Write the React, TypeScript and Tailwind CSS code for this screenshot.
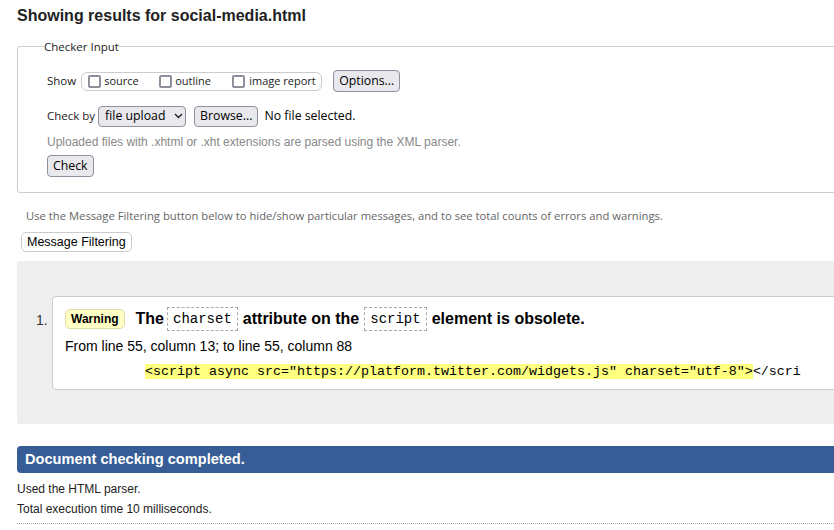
import React from "react";

const arial = { fontFamily: '"Liberation Sans", Arial, sans-serif' };

function Box() {
  return <span className="inline-block w-[13px] h-[13px] border-2 border-[#8f8f9d] rounded-[2px] bg-white shrink-0" />;
}

export default function App() {
  return (
    <div className="w-[834px] h-[530px] overflow-hidden bg-white text-[#222] font-['Liberation_Sans',Arial,sans-serif]">
      <div className="w-[900px] pl-[17px]">
        <h2 className="h-[32px] leading-[32px] text-[16px] font-bold text-[#222]">Showing results for social-media.html</h2>

        <fieldset className="mt-[6px] border border-[#ccc] rounded-[3px] pl-[29px] pr-0 pt-[15px] pb-[12px] h-[155px] font-['Open_Sans',sans-serif]">
          <legend className="ml-[-3px] px-0 text-[11.5px] leading-[17px] text-[#222]">Checker Input</legend>
          <div className="flex items-center h-[22px] text-[11.5px]">
            <span className="mr-[5px]">Show</span>
            <div className="flex items-center h-[19px] w-[241px] border border-[#ccc] rounded-[6px] pl-[6px]">
              <Box />
              <span className="ml-[3px] text-[11px] w-[55px]">source</span>
              <Box />
              <span className="ml-[3px] text-[11px] w-[57px]">outline</span>
              <Box />
              <span className="ml-[4px] text-[11px]">image report</span>
            </div>
            <button className="ml-[11px] h-[22px] px-[5px] bg-[#e9e9ed] border border-[#8f8f9d] rounded-[4px] text-[12.3px] text-black">Options...</button>
          </div>
          <div className="flex items-center h-[22px] mt-[13px] text-[11.5px]">
            <span className="mr-[3px]">Check by</span>
            <div className="flex items-center h-[21px] w-[88px] bg-[#e9e9ed] border border-[#8f8f9d] rounded-[4px] pl-[6px] text-[12.3px] text-black">
              <span>file upload</span>
              <svg className="ml-[9px]" width="9" height="6" viewBox="0 0 9 6"><path d="M1 1l3.5 3.5L8 1" fill="none" stroke="#222" strokeWidth="1.4" /></svg>
            </div>
            <button className="ml-[8px] h-[21px] px-[5px] bg-[#e9e9ed] border border-[#8f8f9d] rounded-[4px] text-[12.3px] text-black">Browse...</button>
            <span className="ml-[6px] text-[12.3px] text-black">No file selected.</span>
          </div>
          <p className="mt-[5px] leading-[20px] text-[12px] text-[#888]" style={arial}>Uploaded files with .xhtml or .xht extensions are parsed using the XML parser.</p>
          <button className="mt-[3px] h-[22px] px-[5px] bg-[#e9e9ed] border border-[#8f8f9d] rounded-[4px] text-[12.3px] text-black">Check</button>
        </fieldset>

        <p className="mt-[14px] pl-[9px] leading-[18px] text-[11.25px] text-[#666] font-['Open_Sans',sans-serif]">Use the Message Filtering button below to hide/show particular messages, and to see total counts of errors and warnings.</p>
        <button className="mt-[7px] ml-[4px] h-[20px] px-[5px] bg-white border border-[#ccc] rounded-[5px] text-[12.5px] text-black font-['Liberation_Sans',Arial,sans-serif]">Message Filtering</button>

        <div className="mt-[8px] bg-[#eee] rounded-[3px] flex pt-[35px] pb-[34px] pl-[19px]">
          <div className="w-[16px] pt-[16px] text-[14px] leading-[16px] text-[#333]">1.</div>
          <div className="flex-1 bg-white border border-[#ccc] rounded-[4px] pl-[12px] pt-[9px] pb-[8px]">
            <div className="flex items-center h-[26px] text-[16px] font-bold text-black">
              <span className="h-[20px] leading-[18px] px-[5px] bg-[#ffffc6] border border-[#e0dca8] rounded-[5px] text-[12px] font-bold">Warning</span>
              <span className="ml-[11px]">The</span>
              <code className="ml-[3px] h-[24px] leading-[22px] px-[5px] border border-dashed border-[#aaa] text-[14px] font-normal font-['Liberation_Mono',monospace]">charset</code>
              <span className="ml-[5px]">attribute on the</span>
              <code className="ml-[5px] h-[24px] leading-[22px] px-[5px] border border-dashed border-[#aaa] text-[14px] font-normal font-['Liberation_Mono',monospace]">script</code>
              <span className="ml-[5px]">element is obsolete.</span>
            </div>
            <p className="mt-[4px] leading-[20px] text-[14px] text-black">From line 55, column 13; to line 55, column 88</p>
            <p className="mt-[7px] pl-[80px] leading-[18px] text-[13.33px] text-black font-['Liberation_Mono',monospace] whitespace-pre">
              <span className="bg-[#ffff80]">{'<script async src="https://platform.twitter.com/widgets.js" charset="utf-8">'}</span>{"</scri"}
            </p>
          </div>
        </div>

        <div className="mt-[22px] h-[27px] bg-[#365d95] rounded-l-[4px] flex items-center pl-[8px]">
          <span className="text-[14.6px] font-bold text-white">Document checking completed.</span>
        </div>
        <p className="mt-[6px] leading-[20px] text-[12px] text-[#222]">Used the HTML parser.</p>
        <p className="leading-[20px] text-[12px] text-[#222]">Total execution time 10 milliseconds.</p>
        <div className="mt-[4px] border-b border-dotted border-[#aaa]" />
      </div>
    </div>
  );
}
